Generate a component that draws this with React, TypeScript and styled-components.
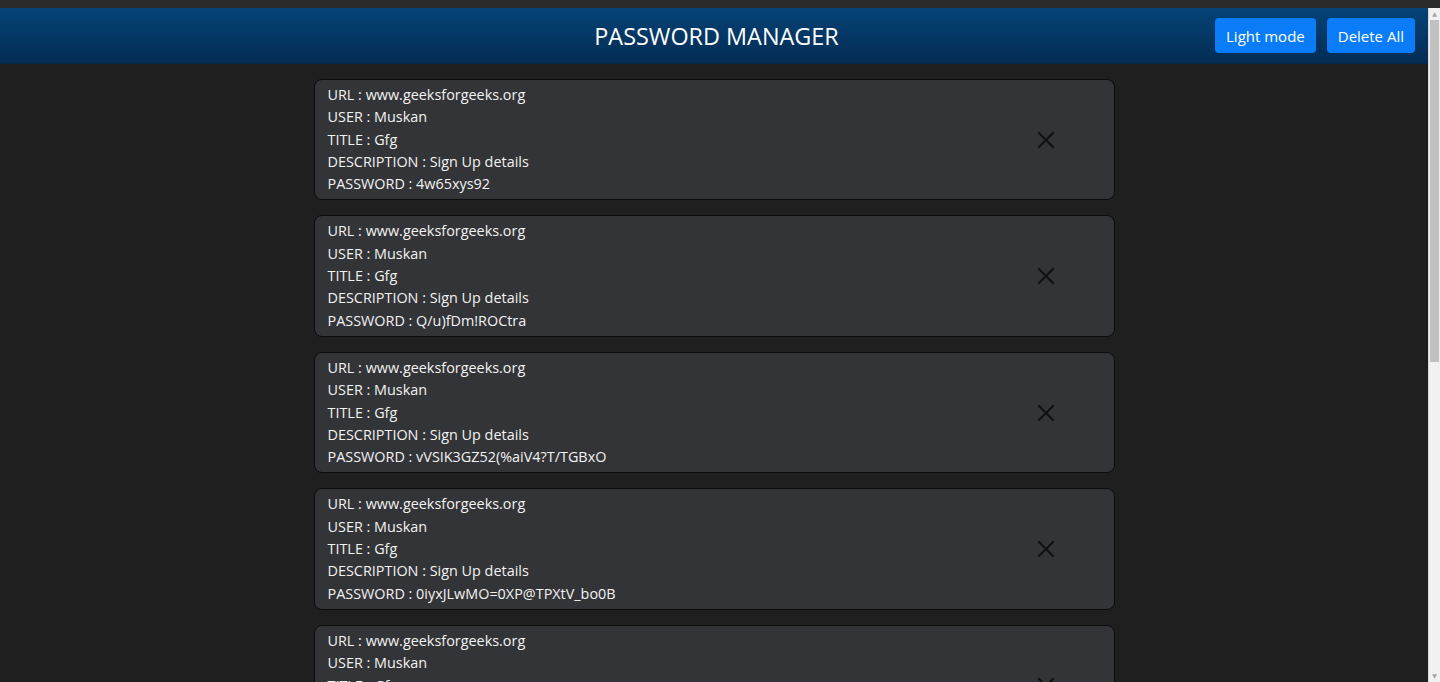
import React from "react";
import styled, { createGlobalStyle } from "styled-components";

const GlobalStyle = createGlobalStyle`
  html, body {
    margin: 0;
    padding: 0;
    height: 100%;
    overflow: hidden;
    background: #2b2b2b;
  }
  body {
    font-family: "Open Sans", "Noto Sans", sans-serif;
  }
`;

interface Entry {
  url: string;
  user: string;
  title: string;
  description: string;
  password: string;
}

const entries: Entry[] = [
  { url: "www.geeksforgeeks.org", user: "Muskan", title: "Gfg", description: "Sign Up details", password: "4w65xys92" },
  { url: "www.geeksforgeeks.org", user: "Muskan", title: "Gfg", description: "Sign Up details", password: "Q/u)fDm!ROCtra" },
  { url: "www.geeksforgeeks.org", user: "Muskan", title: "Gfg", description: "Sign Up details", password: "vVSIK3GZ52(%aiV4?T/TGBxO" },
  { url: "www.geeksforgeeks.org", user: "Muskan", title: "Gfg", description: "Sign Up details", password: "0iyxJLwMO=0XP@TPXtV_bo0B" },
  { url: "www.geeksforgeeks.org", user: "Muskan", title: "Gfg", description: "Sign Up details", password: "p4ssw0rd" },
];

const CloseIcon = () => (
  <svg width="18" height="18" viewBox="0 0 18 18">
    <path d="M2 2 L16 16 M16 2 L2 16" stroke="#111" strokeWidth="2" strokeLinecap="square" />
  </svg>
);

const App: React.FC = () => {
  return (
    <>
      <GlobalStyle />
      <TopStrip />
      <Frame>
        <Page>
          <Header>
            <Title>PASSWORD MANAGER</Title>
            <Actions>
              <ActionButton>Light mode</ActionButton>
              <ActionButton>Delete All</ActionButton>
            </Actions>
          </Header>
          <List>
            {entries.map((item, index) => (
              <Card key={index}>
                <Details>
                  <Line>URL : {item.url}</Line>
                  <Line>USER : {item.user}</Line>
                  <Line>TITLE : {item.title}</Line>
                  <Line>DESCRIPTION : {item.description}</Line>
                  <Line>PASSWORD : {item.password}</Line>
                </Details>
                <RemoveButton aria-label="delete">
                  <CloseIcon />
                </RemoveButton>
              </Card>
            ))}
          </List>
        </Page>
        <ScrollTrack>
          <ScrollArrow>▲</ScrollArrow>
          <ScrollThumb />
          <ScrollSpace />
          <ScrollArrow>▼</ScrollArrow>
        </ScrollTrack>
      </Frame>
    </>
  );
};

export default App;

const TopStrip = styled.div`
  height: 8px;
  background: #2b2b2b;
`;

const Frame = styled.div`
  display: flex;
  height: calc(100vh - 8px);
  background: #1f1f1f;
`;

const Page = styled.div`
  flex: 1;
  overflow: hidden;
`;

const Header = styled.header`
  height: 55px;
  display: flex;
  align-items: center;
  justify-content: center;
  background: linear-gradient(to bottom, #064377, #032c53);
  border-bottom: 1px solid #062848;
  position: relative;
`;

const Title = styled.h1`
  margin: 0 0 0 5px;
  color: #ffffff;
  font-size: 23.4px;
  font-weight: 400;
`;

const Actions = styled.div`
  position: absolute;
  right: 13px;
  top: 10px;
  display: flex;
  gap: 11px;
`;

const ActionButton = styled.button`
  height: 35px;
  padding: 0 11px;
  border: none;
  border-radius: 4px;
  background: #0a7cf7;
  color: #ffffff;
  font-family: inherit;
  font-size: 15px;
  cursor: pointer;
`;

const List = styled.div`
  display: flex;
  flex-direction: column;
  align-items: center;
  gap: 15px;
  padding-top: 15px;
`;

const Card = styled.div`
  width: 801px;
  box-sizing: border-box;
  display: flex;
  align-items: center;
  padding: 4px 13px;
  background: #333437;
  border: 1px solid #0c0c0c;
  border-radius: 8px;
`;

const Details = styled.div`
  flex: 1;
  display: flex;
  flex-direction: column;
`;

const Line = styled.div`
  color: #f2f2f2;
  font-size: 14.4px;
  line-height: 22.3px;
`;

const RemoveButton = styled.button`
  background: none;
  border: none;
  padding: 0;
  margin-right: 46px;
  display: flex;
  cursor: pointer;
`;

const ScrollTrack = styled.div`
  width: 11px;
  background: #f1f1f1;
  border-left: 1px solid #d8d8d8;
  display: flex;
  flex-direction: column;
  align-items: center;
`;

const ScrollArrow = styled.div`
  height: 12px;
  font-size: 6px;
  line-height: 12px;
  color: #a3a3a3;
  font-family: "DejaVu Sans", sans-serif;
`;

const ScrollThumb = styled.div`
  width: 9px;
  height: 342px;
  background: #c1c1c1;
`;

const ScrollSpace = styled.div`
  flex: 1;
`;
